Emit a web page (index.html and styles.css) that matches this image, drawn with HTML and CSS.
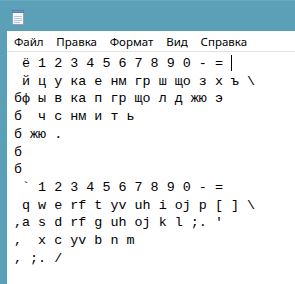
FILE: index.html
```html
<!DOCTYPE html>
<html lang="ru">
<head>
    <meta charset="UTF-8">
    <title>Блокнот</title>
    <link rel="stylesheet" href="styles.css">
</head>
<body>
    <div class="window">
        <div class="titlebar">
            <svg class="app-icon" width="14" height="16" viewBox="0 0 14 16">
                <rect x="1.5" y="2.5" width="11" height="13" fill="#f4f8fc" stroke="#8aa2b8"/>
                <rect x="1.5" y="1.5" width="11" height="2" fill="#6d97c4" stroke="#5a7fa8"/>
                <line x1="3" y1="7.5" x2="11" y2="7.5" stroke="#b9c8d8"/>
                <line x1="3" y1="9.5" x2="11" y2="9.5" stroke="#b9c8d8"/>
                <line x1="3" y1="11.5" x2="11" y2="11.5" stroke="#b9c8d8"/>
                <line x1="3" y1="13.5" x2="9" y2="13.5" stroke="#b9c8d8"/>
            </svg>
        </div>
        <div class="frame">
            <div class="menubar">
                <span class="menu-item">Файл</span>
                <span class="menu-item">Правка</span>
                <span class="menu-item">Формат</span>
                <span class="menu-item">Вид</span>
                <span class="menu-item">Справка</span>
            </div>
            <pre class="editor"> ё 1 2 3 4 5 6 7 8 9 0 - = <span class="caret"></span>
 й ц у ка е нм гр ш що з х ъ \
бф ы в ка п гр що л д жю э
б  ч с нм и т ь
б жю .
б
б
 ` 1 2 3 4 5 6 7 8 9 0 - =
 q w e rf t yv uh i oj p [ ] \
,a s d rf g uh oj k l ;. '
,  x c yv b n m
, ;. /</pre>
        </div>
    </div>
</body>
</html>
```

FILE: styles.css
```css
body {
    margin: 0;
    background: #5ba0b7;
    font-family: "Noto Sans", "Open Sans", sans-serif;
    overflow: hidden;
}
.window {
    height: 284px;
    border-top: 1px solid #6aaabf;
}
.titlebar {
    height: 30px;
    padding-left: 11px;
    display: flex;
    align-items: center;
}
.app-icon {
    display: block;
    margin-top: 2px;
}
.frame {
    margin-left: 7px;
    background: #fff;
    height: 253px;
}
.menubar {
    height: 20px;
    display: flex;
    align-items: center;
    padding-left: 0.5px;
    border-bottom: 1px solid #dfe3e8;
    font-size: 11.5px;
    color: #000;
}
.menu-item {
    padding: 0 6.4px;
}
.editor {
    margin: 0;
    padding: 3px 0 0 7px;
    font-family: "Liberation Mono", monospace;
    font-size: 13.4px;
    line-height: 17.7px;
    color: #000;
}
.caret {
    display: inline-block;
    width: 1px;
    height: 16px;
    background: #000;
    vertical-align: -4px;
}
```
